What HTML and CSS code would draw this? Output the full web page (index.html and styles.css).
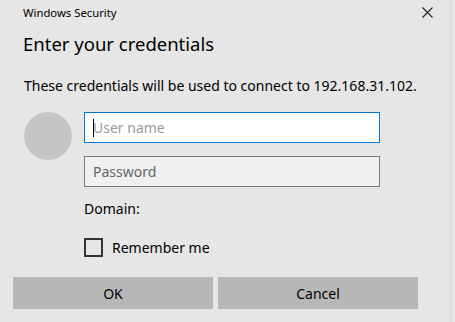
FILE: index.html
```html
<!DOCTYPE html>
<html lang="en">
<head>
    <meta charset="UTF-8">
    <meta name="viewport" content="width=device-width, initial-scale=1.0">
    <title>Windows Security</title>
    <link rel="stylesheet" href="styles.css">
</head>
<body>
    <div class="dialog">
        <div class="titlebar">
            <span class="app-name">Windows Security</span>
            <span class="close">
                <svg width="11" height="11" viewBox="0 0 11 11"><path d="M0.5 0.5 L10.5 10.5 M10.5 0.5 L0.5 10.5" stroke="#222" stroke-width="1.1" fill="none"/></svg>
            </span>
        </div>
        <h1 class="heading">Enter your credentials</h1>
        <p class="message">These credentials will be used to connect to 192.168.31.102.</p>

        <div class="login">
            <div class="avatar"></div>
            <div class="fields">
                <div class="input active"><span class="caret"></span><span class="hint">User name</span></div>
                <div class="input"><span class="hint dark">Password</span></div>
                <div class="domain">Domain:</div>
                <label class="remember"><span class="checkbox"></span>Remember me</label>
            </div>
        </div>

        <div class="buttons">
            <button class="button">OK</button>
            <button class="button">Cancel</button>
        </div>
    </div>
</body>
</html>
```

FILE: styles.css
```css
/* Basic styling */
html, body { margin: 0; padding: 0; background: #e6e6e6; }
body { font-family: "Noto Sans", "Open Sans", sans-serif; color: #000; }
.dialog { width: 451px; height: 322px; border-right: 1px solid #d9d9d9; box-sizing: border-box; }

.titlebar { height: 24px; display: flex; align-items: center; justify-content: space-between; padding: 0 17px 0 23px; }
.app-name { font-size: 11.3px; }
.close { display: flex; width: 11px; height: 11px; }

.heading { margin: 6px 0 0 23px; font-size: 18.5px; font-weight: normal; line-height: 28px; }
.message { margin: 18px 0 0 24px; font-size: 14px; line-height: 20px; }

.login { display: flex; margin-top: 16px; }
.avatar { width: 48px; height: 48px; border-radius: 50%; background: #c4c4c4; margin-left: 24px; }
.fields { margin-left: 12px; display: flex; flex-direction: column; }

.input { width: 296px; height: 31px; box-sizing: border-box; border: 1px solid #7a7a7a; background: #f0f0f0; display: flex; align-items: center; padding-left: 8px; font-size: 14px; }
.input.active { border-color: #0078d7; background: #fff; }
.input + .input { margin-top: 13px; }
.caret { width: 1px; height: 18px; background: #000; margin-right: -1px; }
.hint { color: #9a9a9a; }
.hint.dark { color: #666; }

.domain { font-size: 14px; margin-top: 12px; line-height: 20px; }
.remember { display: flex; align-items: center; font-size: 14px; margin-top: 19px; }
.checkbox { width: 19px; height: 19px; box-sizing: border-box; border: 2px solid #333; margin-right: 9px; }

.buttons { display: flex; gap: 5px; margin: 20px 0 0 13px; }
.button { width: 200px; height: 32px; border: none; background: #b7b7b7; font-family: inherit; font-size: 14px; color: #000; padding: 0; }
```
